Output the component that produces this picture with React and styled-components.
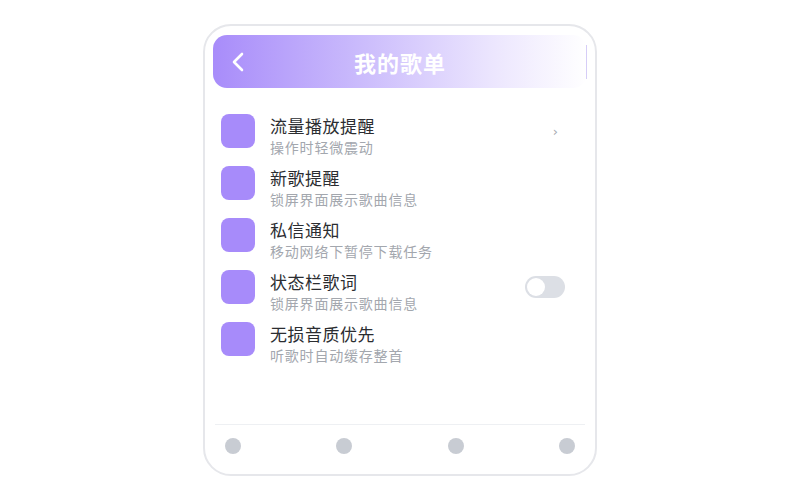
import React from "react";
import styled, { createGlobalStyle } from "styled-components";

// page reset
const GlobalStyle = createGlobalStyle`
  html, body {
    margin: 0;
    padding: 0;
    background: #ffffff;
  }
  body {
    font-family: "Noto Sans CJK SC", "Noto Sans", sans-serif;
  }
`;

const Page = styled.div`
  width: 100vw;
  height: 100vh;
  display: flex;
  align-items: center;
  justify-content: center;
`;

/* phone frame */
const Frame = styled.div`
  width: 394px;
  height: 452px;
  box-sizing: border-box;
  border: 2px solid #e6e7eb;
  border-radius: 28px;
  padding: 9px 8px 0 8px;
  display: flex;
  flex-direction: column;
  background: #fff;
`;

/* header */
const Header = styled.div`
  position: relative;
  height: 53px;
  border-radius: 14px;
  background: linear-gradient(90deg, #a88cfa 0%, #cbbcfc 40%, #ece6fe 75%, #ffffff 100%);
  display: grid;
  grid-template-columns: 44px 1fr 44px;
  align-items: center;

  &::after {
    content: "";
    position: absolute;
    right: 0;
    top: 10px;
    bottom: 9px;
    width: 1px;
    background: #d6cdf7;
  }
`;

const BackButton = styled.button`
  border: none;
  background: none;
  padding: 0 0 0 18px;
  height: 100%;
  display: flex;
  align-items: center;
  cursor: pointer;
`;

const Title = styled.h1`
  margin: 0;
  text-align: center;
  font-size: 22px;
  line-height: 28px;
  font-weight: 700;
  color: #ffffff;
  letter-spacing: 1px;
`;

/* list */
const List = styled.ul`
  list-style: none;
  margin: 26px 0 0 0;
  padding: 0 22px 0 8px;
  display: flex;
  flex-direction: column;
  gap: 9px;
`;

const Row = styled.li`
  display: grid;
  grid-template-columns: 34px 1fr auto;
  column-gap: 15px;
  align-items: start;
  height: 43px;
`;

const Icon = styled.div`
  width: 34px;
  height: 34px;
  border-radius: 8px;
  background: #a78bfa;
`;

const Texts = styled.div`
  margin-top: 1px;
  display: flex;
  flex-direction: column;
  white-space: nowrap;
`;

const RowTitle = styled.span`
  font-size: 17px;
  line-height: 22px;
  letter-spacing: 0.5px;
  color: #2b2d31;
`;

const RowSub = styled.span`
  font-size: 14px;
  line-height: 20px;
  letter-spacing: 0.8px;
  color: #a3a7ae;
`;

const Trailing = styled.div`
  height: 34px;
  display: flex;
  align-items: center;
`;

const Chevron = styled.span`
  font-size: 13px;
  color: #a5a9b0;
  margin-right: 7px;
  font-family: "DejaVu Sans", sans-serif;
`;

const Toggle = styled.div`
  width: 40px;
  height: 22px;
  border-radius: 11px;
  background: #dcdfe5;
  position: relative;

  &::before {
    content: "";
    position: absolute;
    left: 2px;
    top: 2px;
    width: 18px;
    height: 18px;
    border-radius: 50%;
    background: #fff;
  }
`;

const Spacer = styled.div`
  flex: 1;
`;

/* bottom nav */
const Footer = styled.div`
  margin: 0 2px;
  border-top: 1px solid #eef0f3;
  padding: 13px 10px 20px 10px;
  display: flex;
  justify-content: space-between;
`;

const Dot = styled.span`
  width: 16px;
  height: 16px;
  border-radius: 50%;
  background: #c8ccd3;
`;

const items = [
  { title: "流量播放提醒", sub: "操作时轻微震动", trailing: "chevron" },
  { title: "新歌提醒", sub: "锁屏界面展示歌曲信息" },
  { title: "私信通知", sub: "移动网络下暂停下载任务" },
  { title: "状态栏歌词", sub: "锁屏界面展示歌曲信息", trailing: "toggle" },
  { title: "无损音质优先", sub: "听歌时自动缓存整首" },
];

const App = () => {
  return (
    <Page>
      <GlobalStyle />
      <Frame>
        <Header>
          <BackButton aria-label="back">
            <svg width="14" height="20" viewBox="0 0 14 20" fill="none">
              <path
                d="M11 2 L3 10 L11 18"
                stroke="#fff"
                strokeWidth="2.6"
                strokeLinecap="round"
                strokeLinejoin="round"
              />
            </svg>
          </BackButton>
          <Title>我的歌单</Title>
          <span />
        </Header>
        <List>
          {items.map((item) => (
            <Row key={item.title}>
              <Icon />
              <Texts>
                <RowTitle>{item.title}</RowTitle>
                <RowSub>{item.sub}</RowSub>
              </Texts>
              <Trailing>
                {item.trailing === "chevron" && <Chevron>›</Chevron>}
                {item.trailing === "toggle" && <Toggle />}
              </Trailing>
            </Row>
          ))}
        </List>
        <Spacer />
        <Footer>
          <Dot />
          <Dot />
          <Dot />
          <Dot />
        </Footer>
      </Frame>
    </Page>
  );
};

export default App;
